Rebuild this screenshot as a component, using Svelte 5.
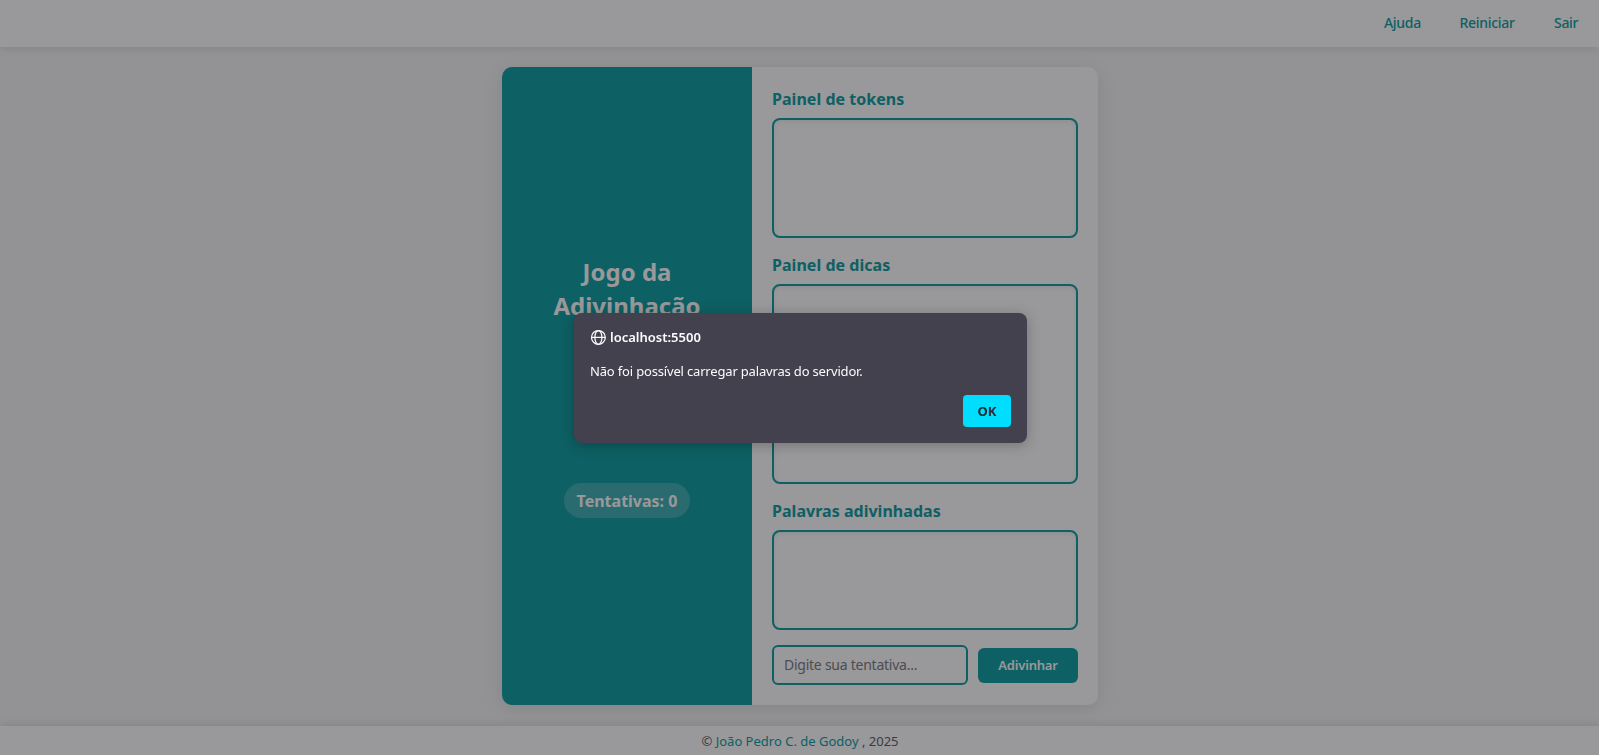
<script>
  let attempts = $state(0);
  let guess = $state('');
  const links = [
    { label: 'Ajuda', width: 37 },
    { label: 'Reiniciar', width: 56 },
    { label: 'Sair', width: 24 }
  ];
  const panels = [
    { title: 'Painel de tokens', size: 'tokens' },
    { title: 'Painel de dicas', size: 'hints' },
    { title: 'Palavras adivinhadas', size: 'words' }
  ];
</script>

<div class="page">
  <header>
    <nav>
      {#each links as link}
        <a href="#top" style="width: {link.width}px">{link.label}</a>
      {/each}
    </nav>
  </header>

  <main>
    <div class="game">
      <aside>
        <h1>Jogo da Adivinhação</h1>
        <div class="attempts">Tentativas: {attempts}</div>
      </aside>
      <section>
        {#each panels as panel}
          <div class="panel">
            <h2>{panel.title}</h2>
            <div class="box {panel.size}"></div>
          </div>
        {/each}
        <form>
          <input placeholder="Digite sua tentativa..." bind:value={guess} />
          <button class="guess" type="button">Adivinhar</button>
        </form>
      </section>
    </div>
  </main>

  <footer>
    <span>© <a href="#author">João Pedro C. de Godoy</a> , 2025</span>
  </footer>
</div>

<div class="overlay">
  <div class="dialog" role="alertdialog" aria-label="localhost:5500">
    <div class="origin">
      <svg width="16" height="16" viewBox="0 0 16 16" fill="none" stroke="#fbfbfe" stroke-width="1.25">
        <circle cx="8.4" cy="8.4" r="6.9" />
        <ellipse cx="8.4" cy="8.4" rx="3.5" ry="6.9" />
        <path d="M1.5 8.4h13.8" />
      </svg>
      <strong>localhost:5500</strong>
    </div>
    <p>Não foi possível carregar palavras do servidor.</p>
    <div class="actions"><button class="ok" type="button">OK</button></div>
  </div>
</div>

<style>
  :global(body) {
    margin: 0;
    overflow: hidden;
    font-family: 'Noto Sans', sans-serif;
  }
  .page {
    height: 755px;
    display: flex;
    flex-direction: column;
    background: #f4f4f4;
  }
  header {
    height: 47px;
    flex: none;
    background: #fff;
    box-shadow: 0 2px 8px rgba(0, 0, 0, 0.1);
  }
  nav {
    height: 44px;
    display: flex;
    align-items: center;
    justify-content: flex-end;
    gap: 38.5px;
    padding-right: 21px;
  }
  nav a {
    font-size: 14px;
    font-weight: 500;
    letter-spacing: -0.3px;
    white-space: nowrap;
  }
  a {
    color: #009999;
    text-decoration: none;
  }
  main {
    flex: 1;
    display: flex;
    align-items: flex-start;
    justify-content: center;
    padding-top: 20px;
  }
  .game {
    width: 596px;
    height: 638px;
    display: flex;
    margin-left: 1px;
    border-radius: 10px;
    overflow: hidden;
    background: #fff;
    box-shadow: 0 4px 20px rgba(0, 0, 0, 0.1);
  }
  aside {
    width: 250px;
    flex: none;
    box-sizing: border-box;
    padding: 20px;
    display: flex;
    flex-direction: column;
    align-items: center;
    justify-content: center;
    gap: 160px;
    background: #009999;
    color: #fff;
  }
  h1 {
    margin: 0;
    padding-top: 1px;
    width: 170px;
    font-size: 24px;
    line-height: 34px;
    font-weight: 700;
    text-align: center;
  }
  .attempts {
    width: 126px;
    height: 35px;
    border-radius: 18px;
    background: rgba(255, 255, 255, 0.2);
    font-size: 16px;
    line-height: 36px;
    font-weight: 700;
    text-align: center;
  }
  section {
    flex: 1;
    box-sizing: border-box;
    padding: 20px;
    display: flex;
    flex-direction: column;
    gap: 15px;
  }
  h2 {
    margin: 0 0 10px;
    height: 21px;
    font-size: 16px;
    line-height: 24px;
    font-weight: 700;
    letter-spacing: 0.03px;
    color: #009999;
  }
  .box {
    box-sizing: border-box;
    border: 2px solid #009999;
    border-radius: 8px;
    box-shadow: inset 0 2px 5px rgba(0, 0, 0, 0.07);
  }
  .tokens { height: 120px; }
  .hints { height: 200px; }
  .words { height: 100px; }
  form {
    display: flex;
    align-items: center;
    gap: 10px;
  }
  input {
    width: 196px;
    height: 40px;
    box-sizing: border-box;
    padding: 0 10px 2px;
    border: 2px solid #009999;
    border-radius: 6px;
    background: #fff;
    font: 14px 'Noto Sans', sans-serif;
    letter-spacing: -0.25px;
  }
  input::placeholder {
    color: #757575;
  }
  button {
    border: 0;
    padding: 0;
    font: 600 13px 'Noto Sans', sans-serif;
  }
  .guess {
    width: 100px;
    height: 35px;
    border-radius: 6px;
    background: #009999;
    color: #fff;
    letter-spacing: -0.2px;
  }
  footer {
    height: 29px;
    flex: none;
    box-sizing: border-box;
    padding-left: 1px;
    display: flex;
    align-items: center;
    justify-content: center;
    background: #fff;
    box-shadow: 0 -2px 8px rgba(0, 0, 0, 0.1);
    font-size: 13px;
    color: #555;
  }
  .overlay {
    position: fixed;
    inset: 0;
    display: flex;
    align-items: center;
    justify-content: center;
    background: rgba(28, 27, 34, 0.45);
  }
  .dialog {
    width: 453px;
    height: 130px;
    box-sizing: border-box;
    padding: 16px;
    margin: 1px 0 0 2px;
    display: flex;
    flex-direction: column;
    border-radius: 8px;
    background: #42414d;
    color: #fbfbfe;
    box-shadow: 0 2px 14px rgba(0, 0, 0, 0.25);
  }
  .origin {
    height: 16px;
    display: flex;
    align-items: center;
    gap: 4px;
    font-size: 13px;
  }
  strong {
    font-weight: 600;
  }
  p {
    margin: 17px 0 0;
    height: 18px;
    font-size: 13px;
    line-height: 18px;
    letter-spacing: -0.17px;
  }
  .actions {
    display: flex;
    justify-content: flex-end;
    margin-top: auto;
    height: 32px;
  }
  .ok {
    width: 48px;
    height: 32px;
    border-radius: 4px;
    background: #00ddff;
    color: #2b2a33;
    font-weight: 700;
  }
</style>
